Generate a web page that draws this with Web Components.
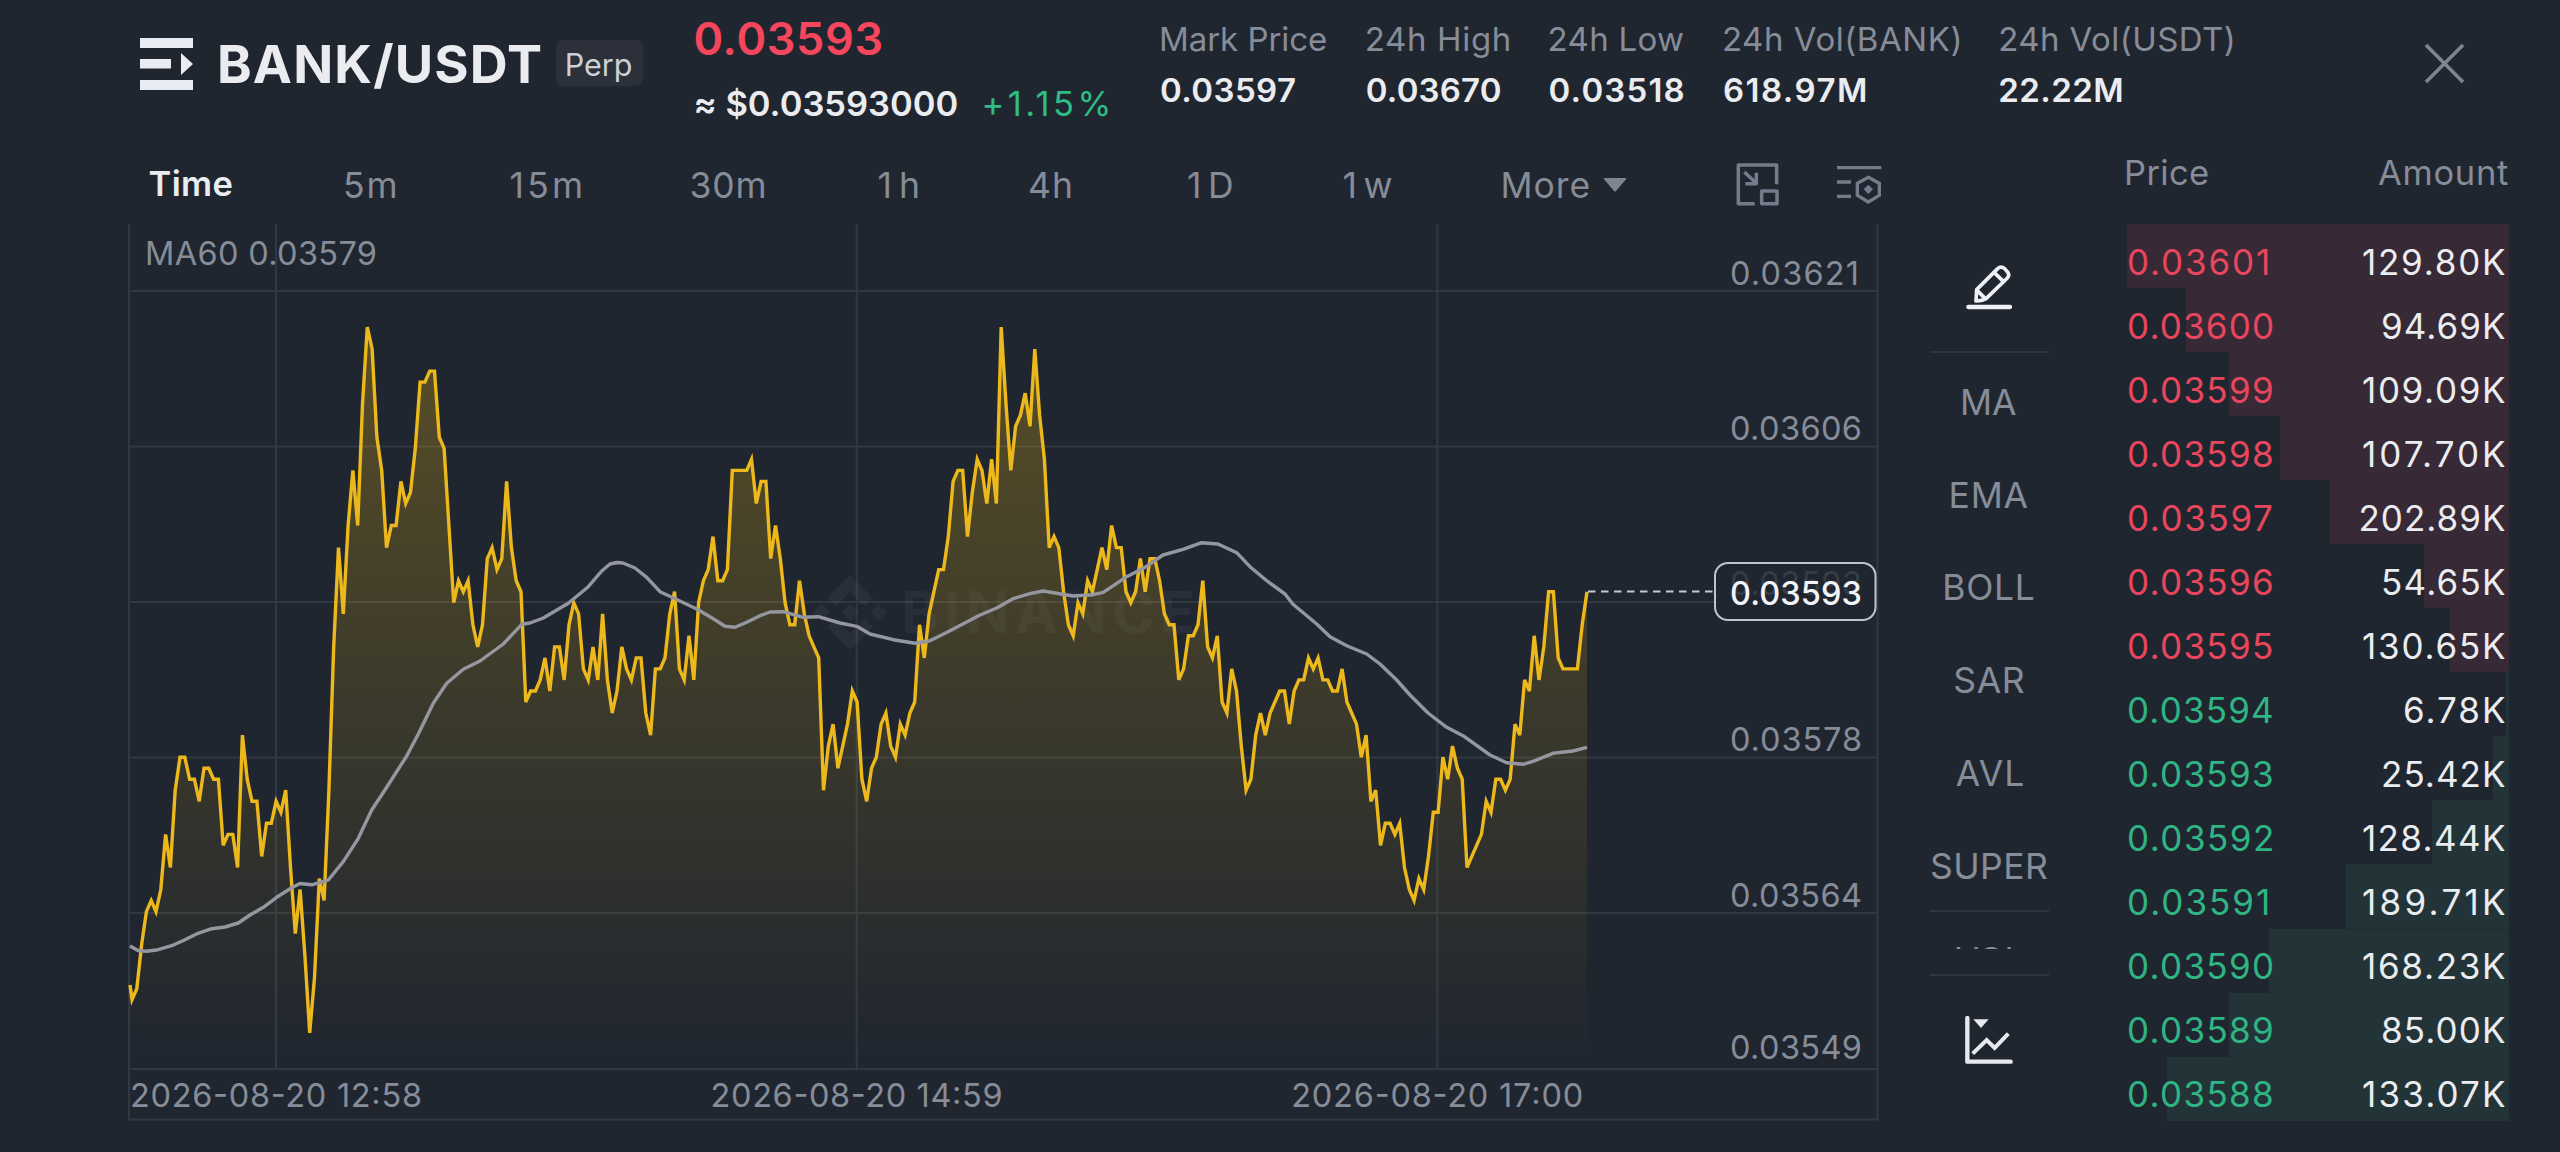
<!DOCTYPE html>
<html lang="en">
<head>
<meta charset="utf-8">
<title>BANK/USDT Perp</title>
<style>
    html, body {
        margin: 0;
        height: 100%;
        background: #202630;
        overflow: hidden;
    }
    body {
        --text: #eaecef;
        --muted: #868c98;
        --line: #2f3641;
        --up: #2ebd85;
        --down: #f6465d;
        font-family: Inter, "Liberation Sans", sans-serif;
        color: var(--text);
    }
</style>
</head>
<body>
<trade-screen></trade-screen>

<script>
// One line of text, spaced so that its ink takes exactly `width` pixels.
class FitText extends HTMLElement {
    constructor() {
        super();
        this.attachShadow({mode: 'open'});
        this.shadowRoot.innerHTML = `
            <style>
                :host {
                    display: block;
                    flex: none;
                    line-height: 1;
                    white-space: nowrap;
                }
                span {
                    display: block;
                }
            </style>
            <span><slot></slot></span>
        `;
        this._span = this.shadowRoot.querySelector('span');
    }

    connectedCallback() {
        const size = this.getAttribute('size') || '35.5';
        const weight = this.getAttribute('weight') || '400';
        const text = this.textContent;
        this.style.fontSize = size + 'px';
        this.style.fontWeight = weight;

        FitText.ctx.font = `${weight} ${size}px Inter, "Liberation Sans", sans-serif`;
        const box = FitText.ctx.measureText(text);
        const ink = box.actualBoundingBoxRight + box.actualBoundingBoxLeft;
        const width = parseFloat(this.getAttribute('width')) || ink;
        this.style.width = width + 'px';
        this._span.style.marginLeft = box.actualBoundingBoxLeft + 'px';
        this._span.style.letterSpacing = (width - ink) / (text.length - 1) + 'px';
    }
}
FitText.ctx = document.createElement('canvas').getContext('2d');
customElements.define('fit-text', FitText);

class StatItem extends HTMLElement {
    constructor() {
        super();
        this.attachShadow({mode: 'open'});
    }

    connectedCallback() {
        const [labelWidth, valueWidth] = this.getAttribute('widths').split(' ');
        this.shadowRoot.innerHTML = `
            <style>
                :host {
                    display: flex;
                    flex-direction: column;
                    gap: 18px;
                    flex: none;
                    width: ${labelWidth}px;
                }
                .label { color: var(--muted); }
            </style>
            <fit-text class="label" size="33" width="${labelWidth}">${this.getAttribute('label')}</fit-text>
            <fit-text size="33" weight="600" width="${valueWidth}">${this.getAttribute('value')}</fit-text>
        `;
    }
}
customElements.define('stat-item', StatItem);

class PairHeader extends HTMLElement {
    constructor() {
        super();
        this.attachShadow({mode: 'open'});
        this.shadowRoot.innerHTML = `
            <style>
                :host {
                    display: flex;
                    height: 150px;
                    box-sizing: border-box;
                    padding: 0 95px 0 140px;
                }
                svg { display: block; flex: none; }
                .pair {
                    display: flex;
                    align-items: center;
                    height: 128px;
                }
                .menu { margin-right: 27px; }
                .badge {
                    display: flex;
                    align-items: center;
                    justify-content: center;
                    width: 86.5px;
                    height: 46px;
                    margin: 0 0 2px 15px;
                    border-radius: 7px;
                    background: #2b303b;
                    color: #ccd0d7;
                }
                .badge fit-text { margin-top: 4px; }
                .price {
                    width: 412px;
                    margin-left: 53px;
                    padding-top: 16.3px;
                }
                .last { color: var(--down); }
                .row {
                    display: flex;
                    margin-top: 25.7px;
                    gap: 27px;
                }
                .change { color: var(--up); }
                .stats {
                    display: flex;
                    gap: 40.8px;
                    margin-left: 53.5px;
                    padding-top: 22.8px;
                }
                .close {
                    margin: 43px 0 0 auto;
                }
            </style>
            <div class="pair">
                <svg class="menu" width="53" height="52" viewBox="0 0 53 52" fill="#eaecf4">
                    <path d="M0 0h53v10H0zM0 21h31v9.500H0zM0 42h53v10H0zM41 15l12 11-12 11z"/>
                </svg>
                <fit-text size="52.5" weight="700" width="321">BANK/USDT</fit-text>
                <div class="badge"><fit-text size="30.500" width="65">Perp</fit-text></div>
            </div>
            <div class="price">
                <fit-text class="last" size="45" weight="600" width="186">0.03593</fit-text>
                <div class="row">
                    <fit-text size="34.5" weight="600" width="262">≈ $0.03593000</fit-text>
                    <fit-text class="change" size="34.5" width="123">+1.15%</fit-text>
                </div>
            </div>
            <div class="stats">
                <stat-item label="Mark Price" value="0.03597" widths="165 134"></stat-item>
                <stat-item label="24h High" value="0.03670" widths="142 134"></stat-item>
                <stat-item label="24h Low" value="0.03518" widths="133.5 134"></stat-item>
                <stat-item label="24h Vol(BANK)" value="618.97M" widths="235.5 142"></stat-item>
                <stat-item label="24h Vol(USDT)" value="22.22M" widths="232.5 122"></stat-item>
            </div>
            <svg class="close" width="41" height="41" viewBox="0 0 41 41" fill="none" stroke="#7d8594" stroke-width="3.6">
                <path d="M2 2l37 37M39 2L2 39"/>
            </svg>
        `;
    }
}
customElements.define('pair-header', PairHeader);

class IntervalBar extends HTMLElement {
    constructor() {
        super();
        this.attachShadow({mode: 'open'});
        this.shadowRoot.innerHTML = `
            <style>
                :host {
                    display: flex;
                    align-items: center;
                    height: 74px;
                    box-sizing: border-box;
                    padding: 0 0 2px 21.5px;
                    color: var(--muted);
                }
                .tabs {
                    display: grid;
                    grid-template-columns: 195.5px 165.5px 181px 187px 151.5px 158px 155.5px 160px auto;
                    align-items: center;
                }
                .active { color: var(--text); margin-bottom: 3px; }
                .more {
                    display: flex;
                    align-items: center;
                    gap: 14.5px;
                }
                svg { display: block; flex: none; }
                .more svg { margin-bottom: 3px; }
                .pip { margin: 0 0 3px 108.5px; }
                .settings { margin: 0 0 3px 57.5px; }
            </style>
            <div class="tabs">
                <fit-text class="active" size="34.5" weight="600" width="82">Time</fit-text>
                <fit-text width="50.5">5m</fit-text>
                <fit-text width="70.5">15m</fit-text>
                <fit-text width="73">30m</fit-text>
                <fit-text width="39.5">1h</fit-text>
                <fit-text width="41">4h</fit-text>
                <fit-text width="44">1D</fit-text>
                <fit-text width="48">1w</fit-text>
                <div class="more">
                    <fit-text width="85">More</fit-text>
                    <svg width="24" height="16" viewBox="0 0 24 16"><path d="M2 1h20q2 0 .8 1.600L13 14q-1 1.200-2 0L1.200 2.600Q0 1 2 1z" fill="#7d8594"/></svg>
                </div>
            </div>
            <svg class="pip" width="43" height="43" viewBox="46 37 129 129" fill="none" stroke="#747c8b" stroke-width="10.500" stroke-linejoin="round">
                <path d="M102 159H53V43h115v58"/>
                <rect x="123" y="121" width="46" height="38"/>
                <path d="M71 64l36 34M107 66v33H74"/>
            </svg>
            <svg class="settings" width="46" height="39" viewBox="348 41 138 117" fill="none" stroke="#747c8b" stroke-width="10">
                <path d="M351 49h133M351 92h42M351 135h42"/>
                <path d="M445 78l33 18v36l-33 20-33-20V96z"/>
                <path d="M445 100l14 14-14 14-14-14z" fill="#747c8b" stroke="none"/>
            </svg>
        `;
    }
}
customElements.define('interval-bar', IntervalBar);

// Closing price of every minute, in units of 0.00001 above 0.03500.
const CLOSES = [
    56, 57, 61, 64, 65, 64, 66, 71, 68, 75, 78, 78, 76, 76, 74, 77, 77, 76, 76, 70,
    71, 71, 68, 80, 76, 74, 74, 69, 72, 72, 74, 73, 75, 68, 62, 66, 60, 53, 58, 67,
    65, 75, 88, 97, 91, 99, 104, 99, 110, 117, 115, 107, 104, 97, 99, 99, 103, 101, 102, 106,
    112, 112, 113, 113, 107, 106, 99, 92, 94, 93, 94, 90, 88, 90, 96, 97, 95, 96, 103, 97,
    94, 93, 83, 84, 84, 85, 87, 84, 88, 88, 85, 90, 92, 91, 86, 85, 88, 85, 91, 85,
    82, 84, 88, 86, 85, 87, 87, 82, 80, 86, 86, 87, 91, 93, 86, 85, 89, 85, 92, 94,
    95, 98, 94, 94, 95, 104, 104, 104, 104, 105, 101, 103, 103, 96, 99, 96, 92, 90, 90, 94,
    91, 89, 88, 87, 75, 79, 81, 77, 79, 81, 84, 83, 76, 74, 77, 78, 81, 82, 79, 78,
    81, 80, 82, 83, 90, 87, 91, 93, 95, 95, 98, 103, 104, 104, 98, 102, 105, 104, 101, 105,
    101, 117, 110, 104, 108, 109, 111, 108, 115, 109, 105, 97, 98, 97, 93, 90, 89, 92, 91, 94,
    93, 95, 97, 95, 99, 97, 97, 93, 92, 93, 96, 93, 96, 96, 94, 91, 90, 90, 85, 86,
    89, 89, 90, 94, 88, 87, 89, 83, 82, 86, 84, 79, 75, 76, 80, 82, 80, 82, 83, 84,
    84, 81, 84, 85, 85, 87, 86, 87, 85, 85, 84, 84, 86, 83, 82, 81, 78, 80, 74, 75,
    70, 72, 72, 71, 72, 68, 66, 65, 67, 66, 69, 73, 73, 78, 76, 79, 77, 76, 68, 69,
    70, 71, 74, 73, 76, 76, 75, 76, 81, 80, 85, 84, 89, 85, 88, 93, 93, 87, 86, 86,
    86, 86, 90, 93
];

const MA60 = `130,946 138,950.5 146.5,951.3 158,949.7 171.7,945.7 185,939.7 198,933.3 211.7,928.7 225,927
    238.3,923 250,915 263.3,907.3 276.7,897.3 291.7,887.7 300,883.5 311.7,884.8 328.3,880 343.3,861.7
    358.3,838.3 371.7,810 386.7,787.3 406.7,756 418.3,734 433.3,703.3 446.7,683.3 463.3,669.3 480,661
    503.3,644 521.7,624.3 530,623 543.3,618 568.3,603.3 588.3,586.7 601.7,571 610,564 617,562.5 623,563
    635,568 646.7,577.3 660,591.7 673,597.7 696.7,609 711.7,617.7 725,626.3 735,627.3 746.7,622.3
    760,615.7 770,612 783,611.7 803,617.3 818.3,616.7 840,623 856.7,626.3 870,634 893.3,639.7 915,643.3
    930,640.7 950,630.7 980,615 996.7,608 1013,598.7 1030,593.7 1043,591 1073,596 1093,594.7 1103.3,592.3
    1126.7,576.7 1145,567.3 1163,555 1183,549.3 1201.7,542.7 1218,544 1236.7,552.7 1250,566.7 1268,581.7
    1285,594 1293,604.3 1316.7,624 1330,636.7 1346.7,645.7 1366.7,654 1380,664 1396.7,680 1410,695
    1428,713 1446.7,727.3 1463,735.7 1490,755 1506.7,762.7 1523,764.3 1533,761.3 1553,753.3 1573,751
    1587,747.3`;

class PriceChart extends HTMLElement {
    constructor() {
        super();
        this.attachShadow({mode: 'open'});

        const points = CLOSES.map((close, i) =>
            `${(132 + i * 4.802).toFixed(1)},${(591.7 + (93 - close) * 11.03).toFixed(1)}`).join(' ');
        const rows = [291, 446.5, 602, 757.5, 913, 1069];
        const labels = [['0.03621', 284.5], ['0.03606', 439.5], ['0.03578', 751], ['0.03564', 906.6], ['0.03549', 1058.6]];
        const dates = [['2026-08-20 12:58', 130], ['2026-08-20 14:59', 710.6], ['2026-08-20 17:00', 1291.2]];

        this.shadowRoot.innerHTML = `
            <style>
                :host { display: block; }
                svg { display: block; }
                text { font-size: 32.5px; fill: var(--muted); }
                .grid { fill: none; stroke: #8a94a6; stroke-opacity: .17; stroke-width: 2; }
                .mark { fill: #8c8cb0; fill-opacity: .08; }
                .mark text { font-size: 57.5px; font-weight: 700; fill: inherit; }
                .ghost { fill-opacity: .22; }
                .now { fill: #f2f3f6; font-weight: 500; }
            </style>
            <svg width="1752" height="898" viewBox="128 224 1752 898">
                <defs>
                    <linearGradient id="fade" gradientUnits="userSpaceOnUse" x1="0" y1="327" x2="0" y2="1060">
                        <stop offset="0" stop-color="#f0b90b" stop-opacity=".27"/>
                        <stop offset="1" stop-color="#f0b90b" stop-opacity="0"/>
                    </linearGradient>
                </defs>
                <path class="grid" d="M129 224V1119.500H1877.500V224M276 224V1069M856.700 224V1069M1437.300 224V1069
                    ${rows.map(y => `M130 ${y}H1877`).join('')}"/>
                <g class="mark">
                    <path transform="translate(813 575) scale(.585 .592)" d="M38.700 53.200L63.300 28.600 87.900 53.200 102.200 38.900 63.300 0 24.400 38.900zM0 63.300L14.300 49 28.600 63.300 14.300 77.600zM38.700 73.400L63.300 98 87.900 73.400 102.200 87.700 63.300 126.600 24.400 87.700zM98 63.300L112.300 49 126.600 63.300 112.300 77.600zM77.800 63.300L63.300 48.800 48.800 63.300 63.300 77.800z"/>
                    <text x="901" y="633" textLength="294">BINANCE</text>
                </g>
                <polygon points="130,985 ${points} 1587,1069 130,1069" fill="url(#fade)"/>
                <polyline points="130,985 ${points}" fill="none" stroke="#ecb81c" stroke-width="3.4"/>
                <polyline points="${MA60}" fill="none" stroke="#94979f" stroke-width="3.4" stroke-linejoin="round"/>
                <path d="M1588 591.500H1714" fill="none" stroke="#c3c7cf" stroke-width="2" stroke-dasharray="7.500 5.500"/>
                <rect x="1715" y="563" width="160.500" height="57" rx="13" fill="#202630" stroke="#c0c4cc" stroke-width="2"/>
                <text class="ghost" x="1730" y="595" textLength="132">0.03593</text>
                <text class="now" x="1730" y="604.500" textLength="132">0.03593</text>
                ${labels.map(([t, y]) => `<text x="1730" y="${y}" textLength="${t.endsWith('1') ? 129 : 132}">${t}</text>`).join('')}
                ${dates.map(([t, x]) => `<text x="${x}" y="1106.500" textLength="292">${t}</text>`).join('')}
                <text x="145" y="265" textLength="232">MA60 0.03579</text>
            </svg>
        `;
    }
}
customElements.define('price-chart', PriceChart);

class IndicatorRail extends HTMLElement {
    constructor() {
        super();
        this.attachShadow({mode: 'open'});
        this.shadowRoot.innerHTML = `
            <style>
                :host {
                    display: flex;
                    flex-direction: column;
                    width: 119px;
                    margin: 74px 0 0 49.5px;
                    color: var(--muted);
                }
                .tool {
                    display: flex;
                    justify-content: center;
                    align-items: center;
                    height: 127px;
                }
                .list {
                    height: 561px;
                    box-sizing: border-box;
                    border: solid var(--line);
                    border-width: 2px 0;
                    padding-top: 3px;
                    overflow: hidden;
                }
                .item {
                    display: flex;
                    justify-content: center;
                    align-items: center;
                    height: 92.900px;
                    padding-left: 1px;
                }
                /* sub-chart indicators, scrolled so that only their upper edge shows */
                .sub {
                    height: 62px;
                    border-bottom: 2px solid var(--line);
                }
                .clip {
                    display: flex;
                    justify-content: center;
                    height: 6px;
                    padding-top: 31px;
                    overflow: hidden;
                }
                svg { display: block; }
            </style>
            <div class="tool">
                <svg width="46" height="46" viewBox="737 347 138 138" fill="none" stroke="#eef0f5" stroke-width="11" stroke-linejoin="round" stroke-linecap="round">
                    <path d="M744 473H869" stroke-width="13"/>
                    <path d="M767 455L769 421 832 358Q842 349 853 358L860 366Q870 376 861 386L798 447Q792 453 767 455zM821 369L850 397M770 423L795 448" />
                </svg>
            </div>
            <div class="list">
                <div class="item"><fit-text width="53">MA</fit-text></div>
                <div class="item"><fit-text width="76">EMA</fit-text></div>
                <div class="item"><fit-text width="88.7">BOLL</fit-text></div>
                <div class="item"><fit-text width="68.7">SAR</fit-text></div>
                <div class="item"><fit-text width="67.7">AVL</fit-text></div>
                <div class="item"><fit-text width="115">SUPER</fit-text></div>
            </div>
            <div class="sub">
                <div class="clip"><fit-text size="34" width="67">VOL</fit-text></div>
            </div>
            <div class="tool">
                <svg width="48" height="48" viewBox="195 378 144 144" fill="none" stroke="#e6e9ee" stroke-width="13" stroke-linejoin="round" stroke-linecap="round">
                    <path d="M202 384V515H332"/>
                    <path d="M218 491L260 450 284 474 325 431" stroke-linecap="butt" stroke-linejoin="miter" stroke-width="12"/>
                    <path d="M220 388H266L243 414z" fill="#e6e9ee" stroke="none"/>
                </svg>
            </div>
        `;
    }
}
customElements.define('indicator-rail', IndicatorRail);

class BookRow extends HTMLElement {
    constructor() {
        super();
        this.attachShadow({mode: 'open'});
    }

    connectedCallback() {
        const side = this.getAttribute('side');
        const price = this.getAttribute('price');
        const tint = side === 'ask' ? '#372935' : '#223438';
        this.shadowRoot.innerHTML = `
            <style>
                :host {
                    display: flex;
                    justify-content: space-between;
                    align-items: center;
                    height: 64.050px;
                    box-sizing: border-box;
                    padding: 12px 4px 0 3px;
                    background: linear-gradient(${tint}, ${tint}) right / ${this.getAttribute('depth')}px 100% no-repeat;
                }
                .price { color: ${side === 'ask' ? '#e8465d' : '#2fb583'}; }
            </style>
            <fit-text class="price" size="35" width="${price.endsWith('1') ? 139 : 143}">${price}</fit-text>
            <fit-text size="35" width="${this.getAttribute('fit')}">${this.getAttribute('amount')}</fit-text>
        `;
    }
}
customElements.define('book-row', BookRow);

const ORDERS = [
    ['ask', '0.03601', '129.80K', 382, 142],
    ['ask', '0.03600', '94.69K', 323, 122],
    ['ask', '0.03599', '109.09K', 280, 142],
    ['ask', '0.03598', '107.70K', 229, 142],
    ['ask', '0.03597', '202.89K', 179, 144.5],
    ['ask', '0.03596', '54.65K', 85, 122],
    ['ask', '0.03595', '130.65K', 59, 142],
    ['bid', '0.03594', '6.78K', 3.5, 100],
    ['bid', '0.03593', '25.42K', 16, 122],
    ['bid', '0.03592', '128.44K', 77, 142],
    ['bid', '0.03591', '189.71K', 163, 142],
    ['bid', '0.03590', '168.23K', 240, 142],
    ['bid', '0.03589', '85.00K', 280, 122],
    ['bid', '0.03588', '133.07K', 342.5, 142]
];

class OrderBook extends HTMLElement {
    constructor() {
        super();
        this.attachShadow({mode: 'open'});
        this.shadowRoot.innerHTML = `
            <style>
                :host {
                    display: block;
                    width: 383px;
                    margin-left: 77.5px;
                }
                .head {
                    display: flex;
                    justify-content: space-between;
                    align-items: center;
                    height: 74px;
                    box-sizing: border-box;
                    padding: 0 1px 27px 1px;
                    color: var(--muted);
                }
            </style>
            <div class="head">
                <fit-text size="34.5" width="81">Price</fit-text>
                <fit-text size="34.5" width="130">Amount</fit-text>
            </div>
            ${ORDERS.map(([side, price, amount, depth, fit]) =>
                `<book-row side="${side}" price="${price}" amount="${amount}" depth="${depth}" fit="${fit}"></book-row>`).join('')}
        `;
    }
}
customElements.define('order-book', OrderBook);

class TradeScreen extends HTMLElement {
    constructor() {
        super();
        this.attachShadow({mode: 'open'});
        this.shadowRoot.innerHTML = `
            <style>
                :host {
                    display: block;
                    width: 2560px;
                    height: 1152px;
                }
                main { display: flex; }
                .chart { padding-left: 128px; width: 1752px; }
            </style>
            <pair-header></pair-header>
            <main>
                <div class="chart">
                    <interval-bar></interval-bar>
                    <price-chart></price-chart>
                </div>
                <indicator-rail></indicator-rail>
                <order-book></order-book>
            </main>
        `;
    }
}
customElements.define('trade-screen', TradeScreen);
</script>
</body>
</html>
